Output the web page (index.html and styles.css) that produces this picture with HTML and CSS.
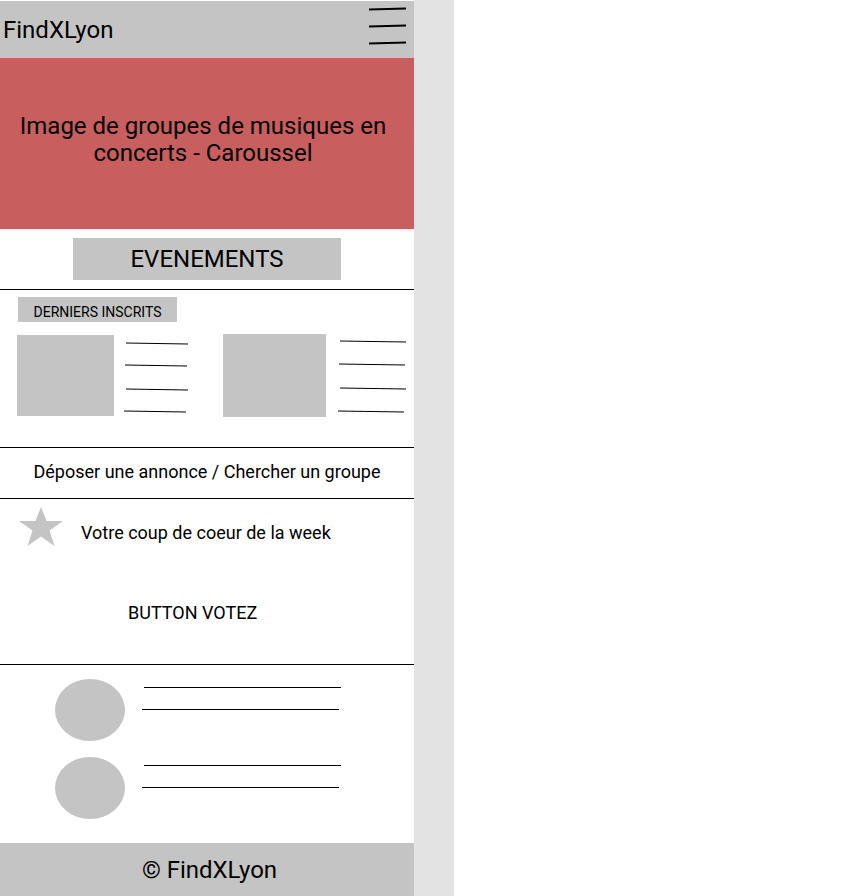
FILE: index.html
```html
<!DOCTYPE html>
<html lang="fr">
<head>
    <meta charset="UTF-8">
    <meta name="viewport" content="width=device-width, initial-scale=1.0">
    <title>FindXLyon</title>
    <link rel="stylesheet" href="styles.css">
</head>
<body>
    <div class="screen">
        <div class="phone">
            <header class="topbar">
                <span class="logo">FindXLyon</span>
                <svg class="burger" width="40" height="46" viewBox="0 0 40 46">
                    <line x1="1" y1="8.5" x2="38" y2="7.5" stroke="#000" stroke-width="2"/>
                    <line x1="1" y1="25.5" x2="38" y2="24.5" stroke="#000" stroke-width="2"/>
                    <line x1="1" y1="42.5" x2="38" y2="41.5" stroke="#000" stroke-width="2"/>
                </svg>
            </header>

            <section class="hero">
                <p>Image de groupes de musiques en concerts - Caroussel</p>
            </section>

            <section class="events">
                <div class="events-btn">EVENEMENTS</div>
            </section>

            <section class="latest">
                <div class="tag">DERNIERS INSCRITS</div>
                <div class="members">
                    <div class="member member-left">
                        <div class="thumb"></div>
                        <svg class="lines" width="66" height="80" viewBox="0 0 66 80">
                            <line x1="4" y1="8" x2="66" y2="9" stroke="#000"/>
                            <line x1="3" y1="30" x2="65" y2="31" stroke="#000"/>
                            <line x1="4" y1="54" x2="66" y2="55" stroke="#000"/>
                            <line x1="2" y1="76" x2="64" y2="77" stroke="#000"/>
                        </svg>
                    </div>
                    <div class="member member-right">
                        <div class="thumb"></div>
                        <svg class="lines" width="68" height="80" viewBox="0 0 68 80">
                            <line x1="2" y1="7" x2="68" y2="8" stroke="#000"/>
                            <line x1="1" y1="30" x2="67" y2="31" stroke="#000"/>
                            <line x1="2" y1="54" x2="68" y2="55" stroke="#000"/>
                            <line x1="0" y1="77" x2="66" y2="78" stroke="#000"/>
                        </svg>
                    </div>
                </div>
            </section>

            <section class="announce">
                Déposer une annonce / Chercher un groupe
            </section>

            <section class="favorite">
                <div class="fav-head">
                    <svg class="star" width="46" height="40" viewBox="0 0 46 40">
                        <polygon points="23,0 28.5,14 45,14 31.5,23.5 36.5,39 23,29.5 9.5,39 14.5,23.5 1,14 17.5,14" fill="#c4c4c4"/>
                    </svg>
                    <span>Votre coup de coeur de la week</span>
                </div>
                <div class="vote">BUTTON VOTEZ</div>
            </section>

            <section class="people">
                <div class="person">
                    <div class="avatar"></div>
                    <div class="person-lines">
                        <span class="rule"></span>
                        <span class="rule rule-short"></span>
                    </div>
                </div>
                <div class="person">
                    <div class="avatar"></div>
                    <div class="person-lines">
                        <span class="rule"></span>
                        <span class="rule rule-short"></span>
                    </div>
                </div>
            </section>

            <footer class="footer">© FindXLyon</footer>
        </div>
        <div class="strip"></div>
    </div>
</body>
</html>
```

FILE: styles.css
```css
/* Page de base */
body {
    margin: 0;
    background-color: #ffffff;
    font-family: Roboto, "Liberation Sans", Arial, sans-serif;
    color: #000000;
}

.screen {
    display: flex;
    height: 896px;
}

.phone {
    width: 414px;
    height: 896px;
    display: flex;
    flex-direction: column;
    background-color: #ffffff;
}

.strip {
    width: 40px;
    height: 896px;
    background-color: #e3e3e3;
}

/* Header */
.topbar {
    margin-top: 1px;
    height: 57px;
    background-color: #c4c4c4;
    display: flex;
    align-items: center;
    justify-content: space-between;
    padding-left: 3px;
    padding-right: 6px;
    flex-shrink: 0;
}

.logo {
    font-size: 24px;
    line-height: 28px;
}

.burger {
    align-self: flex-start;
}

/* Carrousel */
.hero {
    height: 171px;
    background-color: #c95e5e;
    display: flex;
    align-items: center;
    justify-content: center;
    flex-shrink: 0;
}

.hero p {
    margin: 0 0 8px 0;
    padding: 0 18px 0 10px;
    font-size: 24px;
    line-height: 27px;
    text-align: center;
}

/* Evenements */
.events {
    height: 60px;
    border-bottom: 1px solid #000000;
    display: flex;
    justify-content: center;
    align-items: flex-start;
    flex-shrink: 0;
}

.events-btn {
    margin-top: 9px;
    width: 268px;
    height: 42px;
    background-color: #c4c4c4;
    font-size: 24px;
    display: flex;
    align-items: center;
    justify-content: center;
}

/* Derniers inscrits */
.latest {
    height: 157px;
    border-bottom: 1px solid #000000;
    flex-shrink: 0;
}

.tag {
    margin: 7px 0 0 18px;
    width: 159px;
    height: 25px;
    box-sizing: border-box;
    padding-top: 4px;
    background-color: #c4c4c4;
    font-size: 14px;
    display: flex;
    align-items: center;
    justify-content: center;
}

.members {
    display: flex;
    margin-top: 12px;
}

.member {
    display: flex;
    align-items: flex-start;
}

.member-left {
    margin-left: 17px;
    margin-top: 1px;
}

.member-left .thumb {
    width: 97px;
    height: 81px;
}

.member-left .lines {
    margin-left: 8px;
}

.member-right {
    margin-left: 35px;
}

.member-right .thumb {
    width: 103px;
    height: 83px;
}

.member-right .lines {
    margin-left: 12px;
}

.thumb {
    background-color: #c4c4c4;
}

/* Annonce */
.announce {
    height: 51px;
    box-sizing: border-box;
    padding-bottom: 4px;
    border-bottom: 1px solid #000000;
    display: flex;
    align-items: center;
    justify-content: center;
    font-size: 18px;
    flex-shrink: 0;
}

/* Coup de coeur */
.favorite {
    height: 165px;
    border-bottom: 1px solid #000000;
    flex-shrink: 0;
}

.fav-head {
    display: flex;
    align-items: center;
    margin-top: 8px;
    padding-left: 18px;
    font-size: 18px;
}

.fav-head span {
    margin-left: 17px;
    margin-top: 10px;
}

.vote {
    margin-top: 55px;
    padding-left: 128px;
    font-size: 18px;
}

/* Membres */
.people {
    flex: 1;
    padding-top: 14px;
}

.person {
    display: flex;
    align-items: flex-start;
    margin-left: 55px;
    margin-bottom: 16px;
}

.avatar {
    width: 70px;
    height: 62px;
    border-radius: 50%;
    background-color: #c4c4c4;
}

.person-lines {
    margin-left: 17px;
    padding-top: 8px;
    display: flex;
    flex-direction: column;
}

.rule {
    display: block;
    width: 197px;
    height: 1px;
    background-color: #000000;
    margin-left: 2px;
}

.rule-short {
    margin-left: 0;
    margin-top: 21px;
}

/* Footer */
.footer {
    height: 53px;
    box-sizing: border-box;
    padding-left: 5px;
    background-color: #c4c4c4;
    font-size: 24px;
    display: flex;
    align-items: center;
    justify-content: center;
    flex-shrink: 0;
}
```
